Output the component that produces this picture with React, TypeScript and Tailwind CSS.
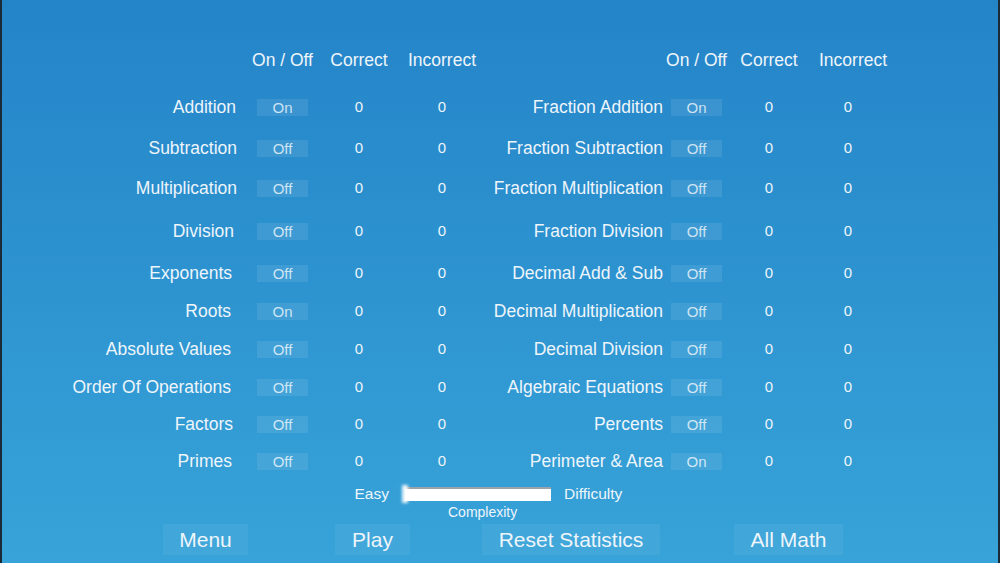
import React from 'react'

type Row = { label: string; on: boolean; h: string; pr: string }

const LEFT: Row[] = [
  { label: 'Addition', on: true, h: 'h-[41px]', pr: 'pr-[1px]' },
  { label: 'Subtraction', on: false, h: 'h-[40px]', pr: 'pr-0' },
  { label: 'Multiplication', on: false, h: 'h-[40px]', pr: 'pr-0' },
  { label: 'Division', on: false, h: 'h-[46px]', pr: 'pr-[3px]' },
  { label: 'Exponents', on: false, h: 'h-[39px]', pr: 'pr-[5px]' },
  { label: 'Roots', on: true, h: 'h-[37px]', pr: 'pr-[6px]' },
  { label: 'Absolute Values', on: false, h: 'h-[38px]', pr: 'pr-[6px]' },
  { label: 'Order Of Operations', on: false, h: 'h-[39px]', pr: 'pr-[6px]' },
  { label: 'Factors', on: false, h: 'h-[35px]', pr: 'pr-[4px]' },
  { label: 'Primes', on: false, h: 'h-[38px]', pr: 'pr-[5px]' },
]

const RIGHT: string[] = [
  'Fraction Addition',
  'Fraction Subtraction',
  'Fraction Multiplication',
  'Fraction Division',
  'Decimal Add & Sub',
  'Decimal Multiplication',
  'Decimal Division',
  'Algebraic Equations',
  'Percents',
  'Perimeter & Area',
]
const RIGHT_ON = [true, false, false, false, false, false, false, false, false, true]

function Toggle({ on }: { on: boolean }) {
  return (
    <div className="w-[51px] h-[17px] bg-white/[0.09] flex items-center justify-center text-[15px] text-white/75 leading-none">
      {on ? 'On' : 'Off'}
    </div>
  )
}

export default function App() {
  return (
    <div
      className="w-[1000px] h-[563px] overflow-hidden border-x-2 border-[#1b2a38] bg-gradient-to-b from-[#2484c8] to-[#37a3d8] text-[#eef5fb] flex flex-col"
      style={{ fontFamily: '"Liberation Sans", Arial, sans-serif' }}
    >
      {/* Column headings */}
      <div className="mt-[40px] h-[40px] flex items-center text-[17.5px]">
        <div className="w-[235px]" />
        <div className="ml-[20px] w-[51px] flex justify-center whitespace-nowrap">On / Off</div>
        <div className="ml-[11px] w-[80px] text-center">Correct</div>
        <div className="ml-[3px] w-[80px] text-center">Incorrect</div>
        <div className="w-[181px]" />
        <div className="ml-[8px] w-[51px] flex justify-center whitespace-nowrap">On / Off</div>
        <div className="ml-[8px] w-[78px] text-center">Correct</div>
        <div className="ml-[1px] w-[78px] text-center pl-[10px]">Incorrect</div>
      </div>

      {/* Rows */}
      <div className="mt-[7px] flex flex-col">
        {LEFT.map((r, i) => (
          <div key={r.label} className={`${r.h} flex items-center`}>
            <div className={`w-[235px] text-right text-[17.5px] whitespace-nowrap ${r.pr}`}>{r.label}</div>
            <div className="ml-[20px]"><Toggle on={r.on} /></div>
            <div className="ml-[11px] w-[80px] text-center text-[15px]">0</div>
            <div className="ml-[3px] w-[80px] text-center text-[15px]">0</div>
            <div className="w-[181px] text-right text-[17.5px] whitespace-nowrap">{RIGHT[i]}</div>
            <div className="ml-[8px]"><Toggle on={RIGHT_ON[i]} /></div>
            <div className="ml-[8px] w-[78px] text-center text-[15px]">0</div>
            <div className="ml-[1px] w-[78px] text-center text-[15px]">0</div>
          </div>
        ))}
      </div>

      {/* Complexity slider */}
      <div className="mt-[2px] h-[24px] flex items-center text-[15.5px]">
        <div className="w-[387px] text-right">Easy</div>
        <div className="ml-[16px] relative w-[146px] h-[14px] bg-white border-t-2 border-[#9aa3aa]">
          <div className="absolute -left-[3px] -top-[4px] w-[6px] h-[18px] bg-white/90 blur-[1.5px]" />
        </div>
        <div className="ml-[13px]">Difficulty</div>
      </div>
      <div className="-mt-[1px] h-[14px] flex items-center text-[14px] leading-none">
        <div className="w-[446px]" />
        <div>Complexity</div>
      </div>

      {/* Buttons */}
      <div className="mt-[5px] flex text-[21px]">
        <div className="ml-[161px] w-[85px] h-[31px] bg-white/[0.06] flex items-center justify-center">Menu</div>
        <div className="ml-[87px] w-[75px] h-[31px] bg-white/[0.06] flex items-center justify-center">Play</div>
        <div className="ml-[72px] w-[178px] h-[31px] bg-white/[0.06] flex items-center justify-center">Reset Statistics</div>
        <div className="ml-[74px] w-[109px] h-[31px] bg-white/[0.06] flex items-center justify-center">All Math</div>
      </div>
    </div>
  )
}
